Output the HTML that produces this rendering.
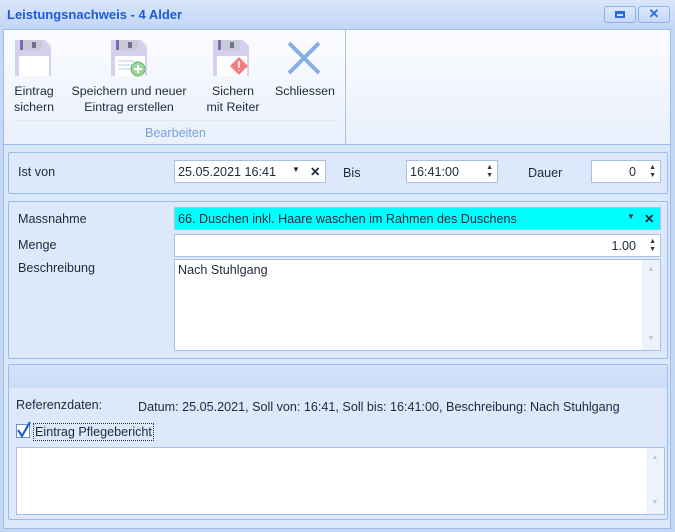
<!DOCTYPE html>
<html><head><style>
*{box-sizing:border-box;margin:0;padding:0}
body{width:675px;height:532px;background:#c5d9f7;font-family:"Liberation Sans",sans-serif;font-size:12.6px;color:#1e2a3a;position:relative;overflow:hidden}
.abs{position:absolute}
.title{left:0;top:0;width:675px;height:29px;background:linear-gradient(#d9e6fb,#c2d6f6);}
.title span{position:absolute;left:7px;top:7px;font-weight:bold;color:#1d5bd6;font-size:13px}
.wb{top:6px;width:32px;height:17px;border:1px solid #8fb0e8;border-radius:3px;background:linear-gradient(#dbe7fb,#c6d9f7)}
.body{left:3px;top:29px;width:668px;height:500px;background:#dbe7fb;border:1px solid #9dbbe9}
.ribbon{left:4px;top:30px;width:666px;height:115px;background:linear-gradient(#fbfcff,#e9f0fc);border-bottom:1px solid #9dbbe9}
.btn{text-align:center;top:83px;line-height:16px;color:#1e2a3a;font-size:12.4px}
.panel{background:#dde8fb;border:1px solid #9dbbe9;border-radius:2px}
.inp{background:#fff;border:1px solid #a9c0e8}
.lbl{color:#1e2a3a}
.sp{position:absolute;right:4px;font-size:7px;line-height:8px;color:#333}
</style></head><body>
<div class="abs title"><span>Leistungsnachweis - 4 Alder</span></div>
<div class="abs wb" style="left:604px"><div style="position:absolute;left:10px;top:4px;width:10px;height:7px;border:2px solid #2b6be0;border-top-width:3px"></div></div>
<div class="abs wb" style="left:638px;text-align:center;color:#2b6be0;font-weight:bold;font-size:13px;line-height:14px">✕</div>
<div class="abs body"></div>
<div class="abs ribbon"></div>
<div class="abs" style="left:345px;top:30px;width:1px;height:114px;background:#a9c3ea"></div>
<div class="abs" style="left:14px;top:120px;width:325px;height:1px;background:#e1e8f3"></div>
<div class="abs" style="left:145px;top:126px;color:#7aa2e0">Bearbeiten</div>
<svg class="abs" style="left:14px;top:39px" width="38" height="38"><path d="M1 1h30l6 6v30H1z" fill="#d6cfee"/><rect x="6" y="1" width="22" height="10" fill="#c9cbd6"/><rect x="6" y="1" width="3" height="10" fill="#7a6fa8"/><rect x="18" y="3" width="4" height="6" fill="#70708a"/><rect x="5" y="17" width="30" height="20" fill="#fff"/></svg>
<svg class="abs" style="left:110px;top:39px" width="40" height="40"><path d="M1 1h30l6 6v30H1z" fill="#d6cfee"/><rect x="6" y="1" width="22" height="10" fill="#c9cbd6"/><rect x="6" y="1" width="3" height="10" fill="#7a6fa8"/><rect x="18" y="3" width="4" height="6" fill="#70708a"/><rect x="5" y="17" width="30" height="20" fill="#fff"/><path d="M8 22h16M8 26h16M8 30h16" stroke="#b9cdee"/><circle cx="28" cy="30" r="7" fill="#9fd49f" stroke="#6bb06b"/><path d="M28 26v8M24 30h8" stroke="#fff" stroke-width="2"/></svg>
<svg class="abs" style="left:212px;top:39px" width="40" height="40"><path d="M1 1h30l6 6v30H1z" fill="#d6cfee"/><rect x="6" y="1" width="22" height="10" fill="#c9cbd6"/><rect x="6" y="1" width="3" height="10" fill="#7a6fa8"/><rect x="18" y="3" width="4" height="6" fill="#70708a"/><rect x="5" y="17" width="30" height="20" fill="#fff"/><path d="M27 18l9 9-9 9-9-9z" fill="#f08080"/><path d="M27 22v7M27 31v1" stroke="#fff" stroke-width="1.5"/></svg>
<svg class="abs" style="left:286px;top:41px" width="36" height="34"><path d="M3 2l30 30M33 2L3 32" stroke="#85aee6" stroke-width="4"/></svg>
<div class="abs btn" style="left:8px;width:52px">Eintrag<br>sichern</div>
<div class="abs btn" style="left:62px;width:134px">Speichern und neuer<br>Eintrag erstellen</div>
<div class="abs btn" style="left:196px;width:74px">Sichern<br>mit Reiter</div>
<div class="abs btn" style="left:268px;width:74px">Schliessen</div>
<div class="abs panel" style="left:8px;top:152px;width:660px;height:42px"></div>
<div class="abs lbl" style="left:18px;top:165px">Ist von</div>
<div class="abs inp" style="left:174px;top:160px;width:152px;height:23px"><span style="position:absolute;left:3px;top:4px">25.05.2021 16:41</span><span style="position:absolute;left:117px;top:4px;font-size:8px">▼</span><span style="position:absolute;left:135px;top:3px;font-weight:bold">✕</span></div>
<div class="abs lbl" style="left:343px;top:166px">Bis</div>
<div class="abs inp" style="left:406px;top:160px;width:92px;height:23px"><span style="position:absolute;left:3px;top:4px">16:41:00</span><span class="sp" style="top:3px">▲<br>▼</span></div>
<div class="abs lbl" style="left:528px;top:166px">Dauer</div>
<div class="abs inp" style="left:591px;top:160px;width:70px;height:23px"><span style="position:absolute;right:24px;top:4px">0</span><span class="sp" style="top:3px">▲<br>▼</span></div>
<div class="abs panel" style="left:8px;top:201px;width:660px;height:158px"></div>
<div class="abs lbl" style="left:18px;top:212px">Massnahme</div>
<div class="abs" style="left:174px;top:207px;width:487px;height:23px;background:#00ffff;border:1px solid #a9c0e8"><span style="position:absolute;left:3px;top:4px">66. Duschen inkl. Haare waschen im Rahmen des Duschens</span><span style="position:absolute;left:452px;top:4px;font-size:8px">▼</span><span style="position:absolute;left:469px;top:3px;font-weight:bold">✕</span></div>
<div class="abs lbl" style="left:18px;top:238px">Menge</div>
<div class="abs inp" style="left:174px;top:234px;width:487px;height:23px"><span style="position:absolute;right:24px;top:4px">1.00</span><span class="sp" style="top:3px">▲<br>▼</span></div>
<div class="abs lbl" style="left:18px;top:261px">Beschreibung</div>
<div class="abs inp" style="left:174px;top:259px;width:487px;height:92px"><span style="position:absolute;left:3px;top:3px">Nach Stuhlgang</span><div style="position:absolute;right:0;top:0;width:18px;height:90px;background:#edf2fb;color:#b8c8e0;font-size:7px;text-align:center;padding-top:6px">▲<div style="margin-top:62px">▼</div></div></div>
<div class="abs panel" style="left:8px;top:364px;width:660px;height:156px"></div>
<div class="abs" style="left:9px;top:365px;width:658px;height:23px;background:linear-gradient(#d4e2fa,#cbdcf8)"></div>
<div class="abs lbl" style="left:16px;top:398px">Referenzdaten:</div>
<div class="abs lbl" style="left:138px;top:400px">Datum: 25.05.2021, Soll von: 16:41, Soll bis: 16:41:00, Beschreibung: Nach Stuhlgang</div>
<div class="abs" style="left:16px;top:424px;width:14px;height:14px;background:#fff;border:1px solid #6f8fc8"></div>
<svg class="abs" style="left:16px;top:420px" width="16" height="18"><path d="M2 10l4 6L14 2" stroke="#1e5ed8" stroke-width="2.2" fill="none"/></svg>
<div class="abs lbl" style="left:33px;top:423px;border:1px dotted #333;padding:0 1px;line-height:16px">Eintrag Pflegebericht</div>
<div class="abs inp" style="left:16px;top:447px;width:649px;height:68px"><div style="position:absolute;right:0;top:0;width:18px;height:66px;background:#edf2fb;color:#b8c8e0;font-size:7px;text-align:center;padding-top:6px">▲<div style="margin-top:38px">▼</div></div></div>
</body></html>
